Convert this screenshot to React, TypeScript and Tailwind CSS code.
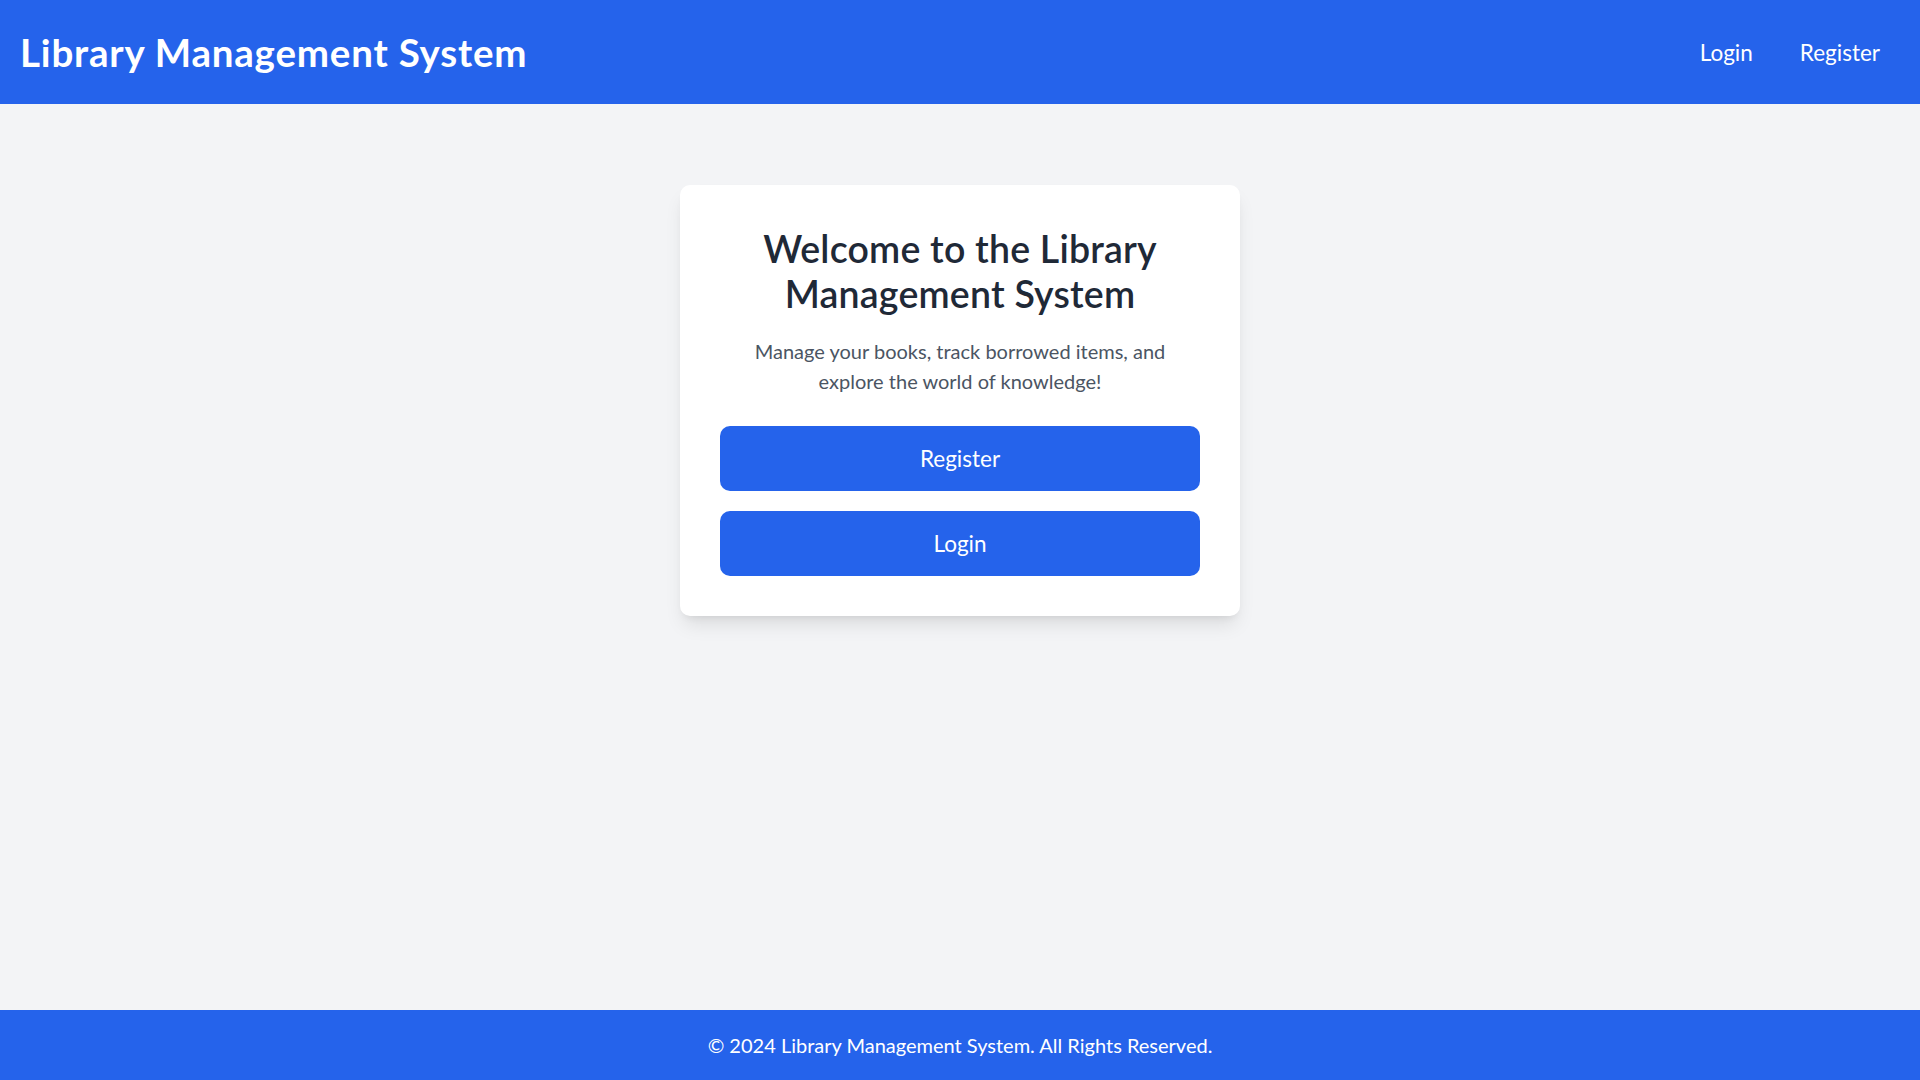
export default function App() {
  return (
    <div className="min-h-screen flex flex-col bg-[#f3f4f6] font-['Lato',sans-serif]">
      <header className="bg-[#2563eb] text-white h-[104px] shrink-0 flex items-center justify-between pl-5 pr-10">
        <h1 className="text-[38.5px] font-bold leading-[45px] tracking-[0.8px]">Library Management System</h1>
        <nav className="flex items-center gap-[47px] text-[22.5px] leading-[35px]">
          <a href="#" className="hover:underline">Login</a>
          <a href="#" className="hover:underline">Register</a>
        </nav>
      </header>

      <main className="flex-1 flex justify-center items-start pt-[81px]">
        <div className="w-[560px] bg-white rounded-[10px] shadow-[0_12px_19px_-4px_rgba(0,0,0,0.1),0_5px_8px_-5px_rgba(0,0,0,0.1)] px-10 pt-[41px] pb-10 text-center">
          <h2 className="text-[37.5px] font-semibold leading-[45px] tracking-[0.2px] text-[#1f2937]">
            Welcome to the Library Management System
          </h2>
          <p className="mt-5 text-[20px] leading-[30px] text-[#4b5563]">
            Manage your books, track borrowed items, and explore the world of knowledge!
          </p>
          <div className="mt-[30px] flex flex-col gap-5">
            <button className="h-[65px] w-full rounded-[10px] bg-[#2563eb] text-white text-[22.5px]">
              Register
            </button>
            <button className="h-[65px] w-full rounded-[10px] bg-[#2563eb] text-white text-[22.5px]">
              Login
            </button>
          </div>
        </div>
      </main>

      <footer className="bg-[#2563eb] text-white h-[70px] shrink-0 flex items-center justify-center text-[20px] leading-[30px]">
        © 2024 Library Management System. All Rights Reserved.
      </footer>
    </div>
  );
}
